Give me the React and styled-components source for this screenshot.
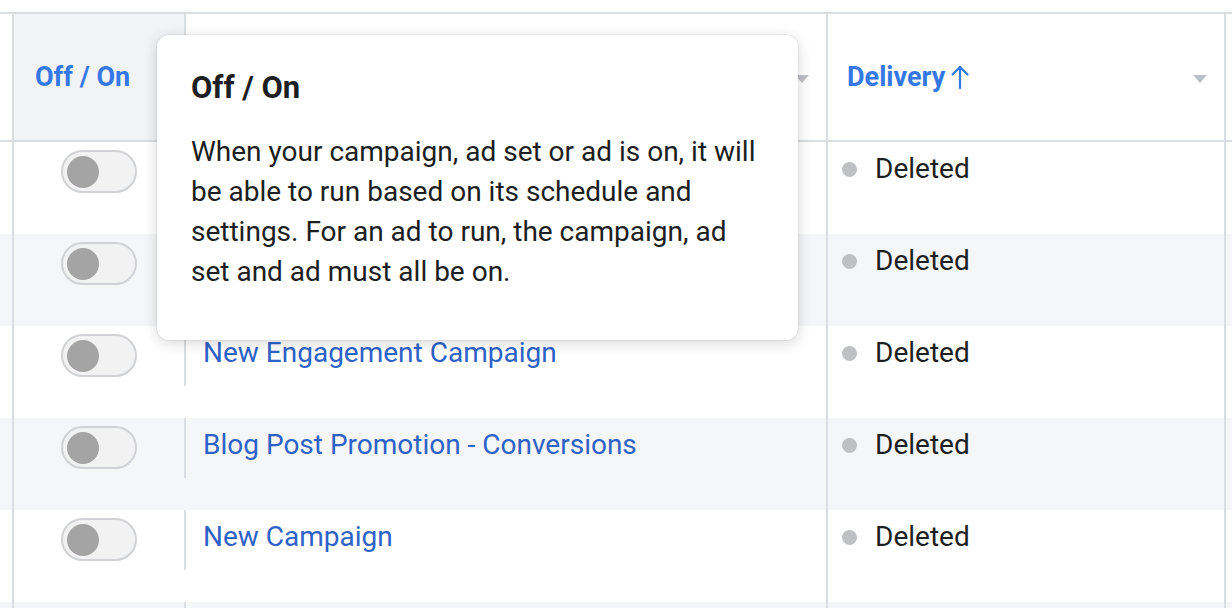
import React from 'react';
import styled, { createGlobalStyle } from "styled-components";

const GlobalStyle = createGlobalStyle`
  html, body {
    margin: 0;
    padding: 0;
    background: #fff;
    font-family: Roboto, "Liberation Sans", Arial, sans-serif;
  }
`
const Page = styled.div`
  position: relative;
  width: 1232px;
  height: 608px;
  overflow: hidden;
  background: #fff;
  padding-top: 12px;
  box-sizing: border-box;
`
const Row = styled.div`
  display: grid;
  grid-template-columns: 12px 172px 642px 400px 1fr;
  height: ${p => p.header ? '130px' : '92px'};
  box-sizing: border-box;
  background-color: ${p => p.striped ? '#f5f6f7' : '#fff'};
  border-top: ${p => p.header ? '2px solid #dadde1' : 'none'};
  border-bottom: ${p => p.header ? '2px solid #dadde1' : 'none'};
`
const HeadCell = styled.div`
  display: flex;
  align-items: center;
  justify-content: space-between;
  padding: ${p => p.first ? '0 0 0 21px' : '0 17px 0 19px'};
  background-color: ${p => p.first ? '#f2f3f5' : '#fff'};
  border-left: 2px solid #dadde1;
  border-right: ${p => p.last ? '2px solid #dadde1' : 'none'};
`
const HeadLabel = styled.span`
  display: flex;
  align-items: center;
  gap: 6px;
  color: #3578e5;
  font-size: 27px;
  font-weight: 700;
  line-height: 34px;
`
const SortCaret = styled.span`
  width: 0;
  height: 0;
  border-left: 7px solid transparent;
  border-right: 7px solid transparent;
  border-top: 8px solid #bcc0c4;
  margin-top: 4px;
`
const ToggleCell = styled.div`
  display: flex;
  justify-content: center;
  align-items: flex-start;
  padding-top: 8px;
  border-left: 2px solid #dadde1;
`
const Switch = styled.div`
  width: 76px;
  height: 43px;
  box-sizing: border-box;
  border: 2px solid #d0d2d5;
  border-radius: 22px;
  background: #f2f2f2;
  display: flex;
  align-items: center;
  padding-left: 4px;
`
const Knob = styled.div`
  width: 32px;
  height: 32px;
  border-radius: 50%;
  background: #a4a4a4;
`
const NameCell = styled.div`
  display: flex;
  align-items: flex-start;
`
const Divider = styled.div`
  width: 2px;
  height: 60px;
  background: #dadde1;
  flex-shrink: 0;
`
const NameLink = styled.a`
  margin-left: 17px;
  padding-top: 10px;
  color: #2f62c7;
  font-size: 28px;
  line-height: 34px;
  text-decoration: none;
  white-space: nowrap;
`
const DeliveryCell = styled.div`
  display: flex;
  align-items: flex-start;
  padding: 10px 0 0 14px;
  border-left: 2px solid #dadde1;
  border-right: 2px solid #dadde1;
`
const Status = styled.div`
  display: flex;
  align-items: center;
  gap: 18px;
  color: #1c1e21;
  font-size: 28px;
  line-height: 34px;
`
const Dot = styled.span`
  width: 15px;
  height: 15px;
  border-radius: 50%;
  background: #bec0c2;
`
const Tooltip = styled.div`
  position: absolute;
  left: 157px;
  top: 35px;
  width: 641px;
  height: 305px;
  box-sizing: border-box;
  padding: 33px 34px 0 34px;
  background: #fff;
  border-radius: 12px;
  box-shadow: 0 0 0 1px rgba(0, 0, 0, 0.05), 0 3px 14px rgba(0, 0, 0, 0.16);
  color: #1c1e21;
`
const TooltipTitle = styled.div`
  font-size: 31px;
  font-weight: 700;
  line-height: 40px;
`
const TooltipBody = styled.div`
  margin-top: 24px;
  font-size: 28px;
  line-height: 40px;
`

const UpArrow = () => (
  <svg width="18" height="24" viewBox="0 0 18 24" fill="none" stroke="#3578e5" strokeWidth="2.2" strokeLinecap="round" strokeLinejoin="round">
    <path d="M9 23V2" />
    <path d="M1.5 9.5L9 2l7.5 7.5" />
  </svg>
)

const campaigns = [
  'Page Likes Campaign',
  'Website Traffic Campaign',
  'New Engagement Campaign',
  'Blog Post Promotion - Conversions',
  'New Campaign',
  'Summer Sale Campaign',
]

const App = () => {
  return (
    <Page>
      <GlobalStyle />
      <Row header>
        <div />
        <HeadCell first>
          <HeadLabel>Off / On</HeadLabel>
        </HeadCell>
        <HeadCell>
          <HeadLabel>Campaign Name</HeadLabel>
          <SortCaret />
        </HeadCell>
        <HeadCell last>
          <HeadLabel>Delivery <UpArrow /></HeadLabel>
          <SortCaret />
        </HeadCell>
        <div />
      </Row>
      {campaigns.map((name, i) => (
        <Row key={name} striped={i % 2 === 1}>
          <div />
          <ToggleCell>
            <Switch><Knob /></Switch>
          </ToggleCell>
          <NameCell>
            <Divider />
            <NameLink href="#">{name}</NameLink>
          </NameCell>
          <DeliveryCell>
            <Status><Dot />Deleted</Status>
          </DeliveryCell>
          <div />
        </Row>
      ))}
      <Tooltip>
        <TooltipTitle>Off / On</TooltipTitle>
        <TooltipBody>
          When your campaign, ad set or ad is on, it will be able to run based on its schedule and settings. For an ad to run, the campaign, ad set and ad must all be on.
        </TooltipBody>
      </Tooltip>
    </Page>
  );
};

export default App;
